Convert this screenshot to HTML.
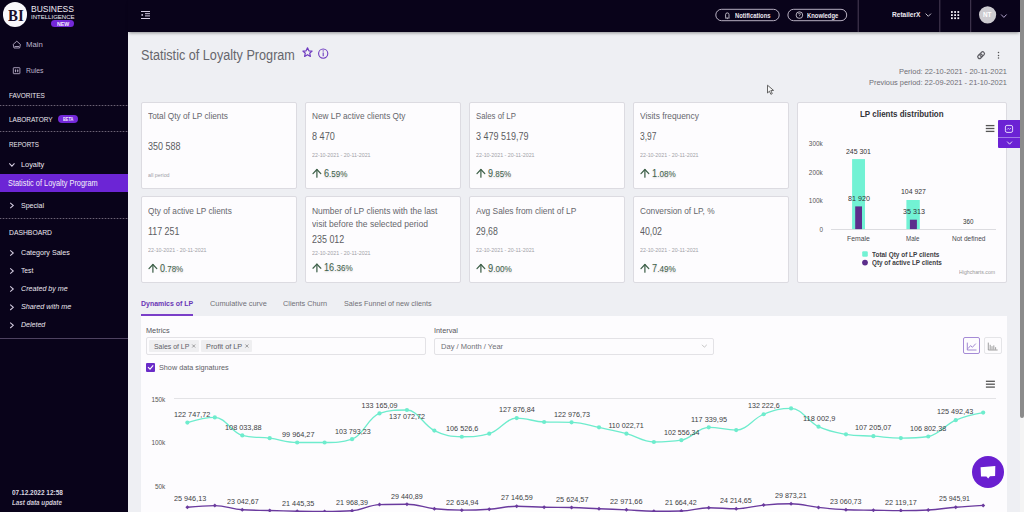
<!DOCTYPE html>
<html><head><meta charset="utf-8">
<style>
*{box-sizing:border-box;margin:0;padding:0}
html,body{width:1024px;height:512px;overflow:hidden;background:#eeeff3;font-family:"Liberation Sans",sans-serif;position:relative}
.a{position:absolute}
.t{position:absolute;white-space:pre;line-height:1;transform-origin:0 0}
#side{position:absolute;left:0;top:0;width:128px;height:512px;background:#09031a}
#hdr{position:absolute;left:128px;top:0;width:892px;height:32px;background:#09031a;box-shadow:0 2px 3px -1px rgba(0,0,0,.4)}
.card{position:absolute;background:#fdfcfe;border:1px solid #dcdbe1;border-radius:2px}
.pill{position:absolute;border:1px solid #bdb6c6;border-radius:7px}
</style></head><body>
<div id="side"></div>
<div id="hdr"></div>
<!-- scrollbar -->
<div class="a" style="left:1020px;top:0;width:4px;height:512px;background:#f4f4f4"></div>
<div class="a" style="left:1020px;top:0;width:4px;height:418px;background:#8b8b8b;border-radius:0 0 2px 2px"></div>

<!-- sidebar shapes -->
<div class="a" style="left:2.7px;top:2.4px;width:24.6px;height:24.6px;border-radius:50%;background:#faf8fc"></div>
<span class="t" style="left:7.6px;top:7.6px;font-family:'Liberation Serif',serif;font-weight:700;font-size:16.5px;color:#1a0f2a;transform:scaleX(0.9)">BI</span>
<div class="a" style="left:51px;top:20.2px;width:23px;height:7px;border-radius:4px;background:#7328d8"></div>
<div class="a" style="left:0;top:105.3px;width:128px;height:1px;background:repeating-linear-gradient(90deg,#6a6276 0 1.5px,#2a2236 1.5px 3px)"></div>
<div class="a" style="left:58.3px;top:114.8px;width:20px;height:8.7px;border-radius:5px;background:#7328d8"></div>
<div class="a" style="left:0;top:131px;width:128px;height:1px;background:repeating-linear-gradient(90deg,#6a6276 0 1.5px,#2a2236 1.5px 3px)"></div>
<div class="a" style="left:0;top:173.7px;width:128px;height:18.1px;background:#6c25d5"></div>
<div class="a" style="left:0;top:218px;width:128px;height:1px;background:repeating-linear-gradient(90deg,#6a6276 0 1.5px,#2a2236 1.5px 3px)"></div>
<div class="a" style="left:0;top:337.8px;width:128px;height:1.2px;background:#4e4260"></div>
<svg class="a" style="left:0;top:0" width="128" height="512" viewBox="0 0 128 512">
 <g fill="none" stroke="#b4aac4" stroke-width="0.9">
  <path d="M13.2 44.4 L16.8 41.2 L20.4 44.4 L19.6 48 H14 Z"/>
  <path d="M14.6 46.5 H19"/>
  <rect x="13.3" y="67.7" width="6.6" height="6" rx="0.5"/>
  <path d="M15.5 69.4 V72.2 M17.7 69.4 V72.2 M14.8 70.8 H16.2 M17 70.8 H18.4"/>
 </g>
 <g fill="none" stroke="#d4cce0" stroke-width="1.05">
  <path d="M9.3 163.4 L11.9 166.2 L14.5 163.4"/>
  <path d="M10.2 202.8 L13.3 205.5 L10.2 208.2"/>
  <path d="M10.2 250.3 L13.3 253.0 L10.2 255.7"/>
  <path d="M10.2 268.3 L13.3 271.0 L10.2 273.7"/>
  <path d="M10.2 286.3 L13.3 289.0 L10.2 291.7"/>
  <path d="M10.2 304.6 L13.3 307.3 L10.2 310.0"/>
  <path d="M10.2 322.6 L13.3 325.3 L10.2 328.0"/>
 </g>
</svg>

<!-- header shapes -->
<svg class="a" style="left:128px;top:0" width="892" height="32" viewBox="128 0 892 32">
 <g fill="#d6cce6">
  <rect x="141" y="11" width="9" height="1"/>
  <rect x="145" y="13.2" width="5" height="1"/>
  <rect x="145" y="15.4" width="5" height="1"/>
  <circle cx="142.2" cy="14.9" r="0.9"/>
  <rect x="141" y="18" width="9" height="1"/>
 </g>
 <rect x="715.8" y="9.3" width="63.4" height="11.4" rx="5.7" fill="none" stroke="#c9c2d2" stroke-width="0.9"/>
 <rect x="787.9" y="9.3" width="58.8" height="11.4" rx="5.7" fill="none" stroke="#c9c2d2" stroke-width="0.9"/>
 <path d="M725 18 H729.6 M725.6 17.6 V14.6 A1.7 1.7 0 0 1 729 14.6 V17.6 M726.8 18.6 H727.8" fill="none" stroke="#e0dce6" stroke-width="0.8"/>
 <circle cx="799.4" cy="15.1" r="3.3" fill="none" stroke="#e0dce6" stroke-width="0.8"/>
 <path d="M798.4 14.2 A1 1 0 1 1 799.6 15.2 V15.9 M799.5 16.9 V17.2" fill="none" stroke="#e0dce6" stroke-width="0.7"/>
 <rect x="857.7" y="0" width="1" height="32" fill="#4a3f58"/>
 <rect x="939.3" y="0" width="1" height="32" fill="#4a3f58"/>
 <rect x="970.2" y="0" width="1" height="32" fill="#4a3f58"/>
 <path d="M925.6 13.6 L928.3 16.3 L931 13.6" fill="none" stroke="#d8d4de" stroke-width="0.9"/>
 <g fill="#f4f0f8">
  <rect x="951" y="11.1" width="1.8" height="1.8"/>
  <rect x="954.2" y="11.1" width="1.8" height="1.8"/>
  <rect x="957.4" y="11.1" width="1.8" height="1.8"/>
  <rect x="951" y="14.2" width="1.8" height="1.8"/>
  <rect x="954.2" y="14.2" width="1.8" height="1.8"/>
  <rect x="957.4" y="14.2" width="1.8" height="1.8"/>
  <rect x="951" y="17.3" width="1.8" height="1.8"/>
  <rect x="954.2" y="17.3" width="1.8" height="1.8"/>
  <rect x="957.4" y="17.3" width="1.8" height="1.8"/>
 </g>
 <circle cx="987.6" cy="14.8" r="8.6" fill="#cdcbd0"/>
 <path d="M1001.1 14.5 L1003.85 17.4 L1006.6 14.5" fill="none" stroke="#c4b4e0" stroke-width="0.9"/>
</svg>

<!-- title icons -->
<svg class="a" style="left:296px;top:40px" width="40" height="24" viewBox="296 40 40 24">
 <path d="M307.5 47.8 L308.9 50.8 L312.1 51.1 L309.7 53.2 L310.4 56.4 L307.5 54.7 L304.6 56.4 L305.3 53.2 L302.9 51.1 L306.1 50.8 Z" fill="none" stroke="#6f3cc0" stroke-width="1.2" stroke-linejoin="round"/>
 <circle cx="323.2" cy="53.6" r="4.6" fill="none" stroke="#6f3cc0" stroke-width="1.1"/>
 <path d="M323.2 52.6 V56.2" stroke="#6f3cc0" stroke-width="1.1"/>
 <circle cx="323.2" cy="50.9" r="0.7" fill="#6f3cc0"/>
</svg>
<svg class="a" style="left:970px;top:44px" width="40" height="20" viewBox="970 44 40 20">
 <g fill="none" stroke="#5e5e64" stroke-width="1.2" transform="rotate(-45 981.1 55.2)">
  <rect x="977.1" y="53.4" width="5" height="3.6" rx="1.8"/>
  <rect x="980.1" y="53.4" width="5" height="3.6" rx="1.8"/>
 </g>
 <circle cx="998.5" cy="52.6" r="0.75" fill="#555"/><circle cx="998.5" cy="55.4" r="0.75" fill="#555"/><circle cx="998.5" cy="58.1" r="0.75" fill="#555"/>
</svg>
<!-- cursor -->
<svg class="a" style="left:762px;top:80px" width="18" height="18" viewBox="762 80 18 18">
 <path d="M767.5 85.2 V93 L769.4 91.2 L770.9 94.3 L772.3 93.6 L770.8 90.6 L773.6 90.4 Z" fill="#f8f8f8" stroke="#555" stroke-width="0.9" stroke-linejoin="round"/>
</svg>

<!-- cards -->
<div class="card" style="left:141px;top:102px;width:156px;height:87px"></div>
<div class="card" style="left:305px;top:102px;width:156px;height:87px"></div>
<div class="card" style="left:469px;top:102px;width:156px;height:87px"></div>
<div class="card" style="left:633px;top:102px;width:156px;height:87px"></div>
<div class="card" style="left:141px;top:196px;width:156px;height:87px"></div>
<div class="card" style="left:305px;top:196px;width:156px;height:87px"></div>
<div class="card" style="left:469px;top:196px;width:156px;height:87px"></div>
<div class="card" style="left:633px;top:196px;width:156px;height:87px"></div>
<div class="card" style="left:797px;top:102px;width:210px;height:181px"></div>
<!-- purple side buttons -->
<div class="a" style="left:998px;top:120.3px;width:22px;height:27.5px;background:#6b22d4;border-radius:1px 0 0 1px"></div>
<div class="a" style="left:998px;top:137px;width:22px;height:1px;background:#a47ae8"></div>
<svg class="a" style="left:998px;top:120px" width="22" height="30" viewBox="998 120 22 30">
 <rect x="1005.4" y="125.4" width="7.2" height="7" rx="1.6" fill="none" stroke="#e2d4fa" stroke-width="1"/>
 <path d="M1007 129.6 L1008.4 128.2 L1009.6 129.4 L1011 128" fill="none" stroke="#e2d4fa" stroke-width="0.8"/>
 <path d="M1007.2 141.6 L1009.6 144.2 L1012 141.6" fill="none" stroke="#f0e8fc" stroke-width="0.9"/>
</svg>

<!-- tabs underline + panel -->
<div class="a" style="left:140.5px;top:314.3px;width:52.2px;height:1.5px;background:#7a3fc8"></div>
<div class="a" style="left:141px;top:316px;width:866px;height:196px;background:#fdfcfe"></div>
<div class="a" style="left:146.3px;top:337.2px;width:279.7px;height:17.8px;border:1px solid #e3e2e6;border-radius:2px"></div>
<div class="a" style="left:148.9px;top:340px;width:50.1px;height:12.2px;background:#efeff1;border-radius:1px"></div>
<div class="a" style="left:201.2px;top:340px;width:51.2px;height:12.2px;background:#efeff1;border-radius:1px"></div>
<div class="a" style="left:434.4px;top:337.5px;width:279.2px;height:17.4px;border:1px solid #e3e2e6;border-radius:2px"></div>
<div class="a" style="left:146.3px;top:363px;width:8.5px;height:8.5px;background:#6a2cc8;border-radius:1px"></div>
<div class="a" style="left:963.1px;top:337.2px;width:17.3px;height:17.3px;border:1px solid #a58bd6;border-radius:2px"></div>
<div class="a" style="left:984.3px;top:337.2px;width:17.5px;height:17.3px;border:1px solid #e5e5e8;border-radius:2px"></div>
<svg class="a" style="left:140px;top:336px" width="870" height="40" viewBox="140 336 870 40">
 <path d="M192.2 344.5 L195.2 347.5 M195.2 344.5 L192.2 347.5 M245.4 344.5 L248.4 347.5 M248.4 344.5 L245.4 347.5" stroke="#777" stroke-width="0.7"/>
 <path d="M702 344.8 L704.4 347.2 L706.8 344.8" fill="none" stroke="#aaa" stroke-width="0.7"/>
 <path d="M148 367.2 L150 369.2 L153.2 365.4" fill="none" stroke="#fff" stroke-width="1.1"/>
 <g fill="none" stroke="#8a6cc6" stroke-width="0.8">
  <path d="M967.3 342.6 V350 H976.5"/>
  <path d="M968 348.6 L970.6 345.6 L972.4 347.3 L975.8 343.6"/>
 </g>
 <g fill="none" stroke="#888" stroke-width="0.8">
  <path d="M988.3 342.6 V350 H997.6"/>
  <path d="M990.2 349.6 V344.8 M992 349.6 V346.2 M993.8 349.6 V345.4 M995.6 349.6 V347.2"/>
 </g>
</svg>

<!-- charts -->
<svg class="a" style="left:0;top:0" width="1024" height="512" viewBox="0 0 1024 512">
<line x1="831" y1="229.5" x2="996" y2="229.5" stroke="#dcdce0" stroke-width="1"/>
<rect x="852.1" y="159.1" width="12.9" height="70.00" fill="#72f2d4"/>
<rect x="906.4" y="200" width="13.4" height="29.1" fill="#72f2d4"/>
<rect x="855.2" y="206.4" width="6.8" height="22.7" fill="#5c2e8c"/>
<rect x="909.9" y="219.7" width="7" height="9.4" fill="#5c2e8c"/>
<rect x="862.2" y="251.2" width="5.6" height="5.6" rx="1.2" fill="#72f2d4"/>
<circle cx="865" cy="262.6" r="2.9" fill="#5c2e8c"/>
<rect x="985.8" y="124.95" width="8.6" height="1.3" fill="#555"/>
<rect x="985.8" y="127.85" width="8.6" height="1.3" fill="#555"/>
<rect x="985.8" y="130.75" width="8.6" height="1.3" fill="#555"/>
<rect x="985.9" y="380.65" width="9" height="1.3" fill="#555"/>
<rect x="985.9" y="383.55" width="9" height="1.3" fill="#555"/>
<rect x="985.9" y="386.45" width="9" height="1.3" fill="#555"/>
<line x1="174" y1="398.5" x2="996" y2="398.5" stroke="#e3e3e6" stroke-width="1"/>
<path d="M187.40 422.55 C187.40 422.55 203.86 417.40 214.84 417.40 C225.82 417.40 231.30 432.64 242.28 435.42 C253.26 438.20 258.74 436.79 269.72 438.20 C280.70 439.61 286.18 442.46 297.16 442.48 C308.14 442.50 313.62 442.50 324.60 442.50 C335.58 442.50 341.06 442.50 352.04 439.13 C363.02 435.76 368.50 416.85 379.48 413.43 C390.46 410.01 395.94 410.01 406.92 410.01 C417.90 410.01 423.38 425.25 434.36 430.60 C445.34 435.95 450.82 436.74 461.80 436.74 C472.78 436.74 478.26 436.74 489.24 433.70 C500.22 430.66 505.70 418.06 516.68 418.06 C527.66 418.06 533.14 421.65 544.12 422.00 C555.10 422.35 560.58 422.00 571.56 422.35 C582.54 422.69 588.02 425.03 599.00 427.30 C609.98 429.57 615.46 430.74 626.44 433.68 C637.42 436.62 642.90 442.00 653.88 442.00 C664.86 442.00 670.34 442.00 681.32 440.21 C692.30 438.43 697.78 427.28 708.76 427.28 C719.74 427.28 725.22 430.10 736.20 430.10 C747.18 430.10 752.66 418.60 763.64 414.26 C774.62 409.92 780.10 408.40 791.08 408.40 C802.06 408.40 807.54 421.52 818.52 426.70 C829.50 431.88 834.98 432.45 845.96 434.30 C856.94 436.15 862.42 435.39 873.40 436.15 C884.38 436.91 889.86 438.10 900.84 438.10 C911.82 438.10 917.30 438.10 928.28 436.50 C939.26 434.90 944.74 424.92 955.72 420.14 C966.70 415.36 983.16 412.60 983.16 412.60" fill="none" stroke="#6eeccd" stroke-width="1.3"/>
<circle cx="187.40" cy="422.55" r="2.1" fill="#6eeccd"/>
<circle cx="214.84" cy="417.40" r="2.1" fill="#6eeccd"/>
<circle cx="242.28" cy="435.42" r="2.1" fill="#6eeccd"/>
<circle cx="269.72" cy="438.20" r="2.1" fill="#6eeccd"/>
<circle cx="297.16" cy="442.48" r="2.1" fill="#6eeccd"/>
<circle cx="324.60" cy="442.50" r="2.1" fill="#6eeccd"/>
<circle cx="352.04" cy="439.13" r="2.1" fill="#6eeccd"/>
<circle cx="379.48" cy="413.43" r="2.1" fill="#6eeccd"/>
<circle cx="406.92" cy="410.01" r="2.1" fill="#6eeccd"/>
<circle cx="434.36" cy="430.60" r="2.1" fill="#6eeccd"/>
<circle cx="461.80" cy="436.74" r="2.1" fill="#6eeccd"/>
<circle cx="489.24" cy="433.70" r="2.1" fill="#6eeccd"/>
<circle cx="516.68" cy="418.06" r="2.1" fill="#6eeccd"/>
<circle cx="544.12" cy="422.00" r="2.1" fill="#6eeccd"/>
<circle cx="571.56" cy="422.35" r="2.1" fill="#6eeccd"/>
<circle cx="599.00" cy="427.30" r="2.1" fill="#6eeccd"/>
<circle cx="626.44" cy="433.68" r="2.1" fill="#6eeccd"/>
<circle cx="653.88" cy="442.00" r="2.1" fill="#6eeccd"/>
<circle cx="681.32" cy="440.21" r="2.1" fill="#6eeccd"/>
<circle cx="708.76" cy="427.28" r="2.1" fill="#6eeccd"/>
<circle cx="736.20" cy="430.10" r="2.1" fill="#6eeccd"/>
<circle cx="763.64" cy="414.26" r="2.1" fill="#6eeccd"/>
<circle cx="791.08" cy="408.40" r="2.1" fill="#6eeccd"/>
<circle cx="818.52" cy="426.70" r="2.1" fill="#6eeccd"/>
<circle cx="845.96" cy="434.30" r="2.1" fill="#6eeccd"/>
<circle cx="873.40" cy="436.15" r="2.1" fill="#6eeccd"/>
<circle cx="900.84" cy="438.10" r="2.1" fill="#6eeccd"/>
<circle cx="928.28" cy="436.50" r="2.1" fill="#6eeccd"/>
<circle cx="955.72" cy="420.14" r="2.1" fill="#6eeccd"/>
<circle cx="983.16" cy="412.60" r="2.1" fill="#6eeccd"/>
<path d="M187.40 507.25 C187.40 507.25 203.86 505.60 214.84 505.60 C225.82 505.60 231.30 509.08 242.28 509.79 C253.26 510.50 258.74 510.22 269.72 510.50 C280.70 510.78 286.18 510.99 297.16 511.19 C308.14 511.39 313.62 511.50 324.60 511.50 C335.58 511.50 341.06 511.50 352.04 510.73 C363.02 509.96 368.50 505.01 379.48 504.60 C390.46 504.19 395.94 504.19 406.92 504.19 C417.90 504.19 423.38 507.51 434.36 508.70 C445.34 509.89 450.82 510.14 461.80 510.14 C472.78 510.14 478.26 509.99 489.24 509.20 C500.22 508.41 505.70 506.20 516.68 506.20 C527.66 506.20 533.14 506.93 544.12 507.20 C555.10 507.47 560.58 507.23 571.56 507.53 C582.54 507.83 588.02 508.24 599.00 508.70 C609.98 509.16 615.46 509.35 626.44 509.85 C637.42 510.35 642.90 511.20 653.88 511.20 C664.86 511.20 670.34 511.20 681.32 510.99 C692.30 510.79 697.78 507.70 708.76 507.70 C719.74 507.70 725.22 508.76 736.20 508.76 C747.18 508.76 752.66 506.09 763.64 505.10 C774.62 504.11 780.10 503.81 791.08 503.81 C802.06 503.81 807.54 506.21 818.52 507.40 C829.50 508.59 834.98 509.34 845.96 509.77 C856.94 510.20 862.42 510.04 873.40 510.20 C884.38 510.36 889.86 510.60 900.84 510.60 C911.82 510.60 917.30 510.60 928.28 510.00 C939.26 509.40 944.74 508.17 955.72 507.25 C966.70 506.33 983.16 505.40 983.16 505.40" fill="none" stroke="#6a3a9e" stroke-width="1.4"/>
<path d="M187.40 505.25L189.40 507.25L187.40 509.25L185.40 507.25Z" fill="#6a3a9e"/>
<path d="M214.84 503.60L216.84 505.60L214.84 507.60L212.84 505.60Z" fill="#6a3a9e"/>
<path d="M242.28 507.79L244.28 509.79L242.28 511.79L240.28 509.79Z" fill="#6a3a9e"/>
<path d="M269.72 508.50L271.72 510.50L269.72 512.50L267.72 510.50Z" fill="#6a3a9e"/>
<path d="M297.16 509.19L299.16 511.19L297.16 513.19L295.16 511.19Z" fill="#6a3a9e"/>
<path d="M324.60 509.50L326.60 511.50L324.60 513.50L322.60 511.50Z" fill="#6a3a9e"/>
<path d="M352.04 508.73L354.04 510.73L352.04 512.73L350.04 510.73Z" fill="#6a3a9e"/>
<path d="M379.48 502.60L381.48 504.60L379.48 506.60L377.48 504.60Z" fill="#6a3a9e"/>
<path d="M406.92 502.19L408.92 504.19L406.92 506.19L404.92 504.19Z" fill="#6a3a9e"/>
<path d="M434.36 506.70L436.36 508.70L434.36 510.70L432.36 508.70Z" fill="#6a3a9e"/>
<path d="M461.80 508.14L463.80 510.14L461.80 512.14L459.80 510.14Z" fill="#6a3a9e"/>
<path d="M489.24 507.20L491.24 509.20L489.24 511.20L487.24 509.20Z" fill="#6a3a9e"/>
<path d="M516.68 504.20L518.68 506.20L516.68 508.20L514.68 506.20Z" fill="#6a3a9e"/>
<path d="M544.12 505.20L546.12 507.20L544.12 509.20L542.12 507.20Z" fill="#6a3a9e"/>
<path d="M571.56 505.53L573.56 507.53L571.56 509.53L569.56 507.53Z" fill="#6a3a9e"/>
<path d="M599.00 506.70L601.00 508.70L599.00 510.70L597.00 508.70Z" fill="#6a3a9e"/>
<path d="M626.44 507.85L628.44 509.85L626.44 511.85L624.44 509.85Z" fill="#6a3a9e"/>
<path d="M653.88 509.20L655.88 511.20L653.88 513.20L651.88 511.20Z" fill="#6a3a9e"/>
<path d="M681.32 508.99L683.32 510.99L681.32 512.99L679.32 510.99Z" fill="#6a3a9e"/>
<path d="M708.76 505.70L710.76 507.70L708.76 509.70L706.76 507.70Z" fill="#6a3a9e"/>
<path d="M736.20 506.76L738.20 508.76L736.20 510.76L734.20 508.76Z" fill="#6a3a9e"/>
<path d="M763.64 503.10L765.64 505.10L763.64 507.10L761.64 505.10Z" fill="#6a3a9e"/>
<path d="M791.08 501.81L793.08 503.81L791.08 505.81L789.08 503.81Z" fill="#6a3a9e"/>
<path d="M818.52 505.40L820.52 507.40L818.52 509.40L816.52 507.40Z" fill="#6a3a9e"/>
<path d="M845.96 507.77L847.96 509.77L845.96 511.77L843.96 509.77Z" fill="#6a3a9e"/>
<path d="M873.40 508.20L875.40 510.20L873.40 512.20L871.40 510.20Z" fill="#6a3a9e"/>
<path d="M900.84 508.60L902.84 510.60L900.84 512.60L898.84 510.60Z" fill="#6a3a9e"/>
<path d="M928.28 508.00L930.28 510.00L928.28 512.00L926.28 510.00Z" fill="#6a3a9e"/>
<path d="M955.72 505.25L957.72 507.25L955.72 509.25L953.72 507.25Z" fill="#6a3a9e"/>
<path d="M983.16 503.40L985.16 505.40L983.16 507.40L981.16 505.40Z" fill="#6a3a9e"/>
<g stroke="#3e6049" stroke-width="1.25" fill="none" stroke-linecap="round" stroke-linejoin="round"><path d="M316.90 169.60V177.20"/><path d="M313.00 173.60L316.90 169.50L320.80 173.60"/></g>
<g stroke="#3e6049" stroke-width="1.25" fill="none" stroke-linecap="round" stroke-linejoin="round"><path d="M480.90 169.60V177.20"/><path d="M477.00 173.60L480.90 169.50L484.80 173.60"/></g>
<g stroke="#3e6049" stroke-width="1.25" fill="none" stroke-linecap="round" stroke-linejoin="round"><path d="M644.90 169.60V177.20"/><path d="M641.00 173.60L644.90 169.50L648.80 173.60"/></g>
<g stroke="#3e6049" stroke-width="1.25" fill="none" stroke-linecap="round" stroke-linejoin="round"><path d="M152.90 264.60V272.20"/><path d="M149.00 268.60L152.90 264.50L156.80 268.60"/></g>
<g stroke="#3e6049" stroke-width="1.25" fill="none" stroke-linecap="round" stroke-linejoin="round"><path d="M316.90 264.20V271.80"/><path d="M313.00 268.20L316.90 264.10L320.80 268.20"/></g>
<g stroke="#3e6049" stroke-width="1.25" fill="none" stroke-linecap="round" stroke-linejoin="round"><path d="M480.90 264.60V272.20"/><path d="M477.00 268.60L480.90 264.50L484.80 268.60"/></g>
<g stroke="#3e6049" stroke-width="1.25" fill="none" stroke-linecap="round" stroke-linejoin="round"><path d="M644.90 264.60V272.20"/><path d="M641.00 268.60L644.90 264.50L648.80 268.60"/></g>
</svg>

<!-- chat bubble -->
<div class="a" style="left:972.3px;top:455.8px;width:32px;height:32px;border-radius:50%;background:#6a1fd0"></div>
<svg class="a" style="left:970px;top:454px" width="36" height="36" viewBox="970 454 36 36">
 <path d="M980.6 467.2 L995.3 466.1 L995.1 476.1 L990 476.3 L988.2 478.6 L986.4 476.4 L981 476.6 Z" fill="#fff"/>
</svg>

<span class='t' style='left:30.50px;top:5.51px;font-size:8.2px;font-weight:400;font-style:normal;color:#f0ecf4;transform:scaleX(1.0371);'>BUSINESS</span>
<span class='t' style='left:30.50px;top:14.18px;font-size:6.2px;font-weight:400;font-style:normal;color:#f0ecf4;transform:scaleX(0.9759);'>INTELLIGENCE</span>
<span class='t' style='left:56.50px;top:20.68px;font-size:6px;font-weight:700;font-style:normal;color:#f4eefc;transform:scaleX(0.8720);'>NEW</span>
<span class='t' style='left:25.60px;top:40.70px;font-size:8px;font-weight:400;font-style:normal;color:#beb5cc;transform:scaleX(0.9710);'>Main</span>
<span class='t' style='left:25.60px;top:66.60px;font-size:8px;font-weight:400;font-style:normal;color:#beb5cc;transform:scaleX(0.8556);'>Rules</span>
<span class='t' style='left:8.80px;top:91.50px;font-size:8px;font-weight:400;font-style:normal;color:#ece8f0;transform:scaleX(0.8074);'>FAVORITES</span>
<span class='t' style='left:8.80px;top:115.60px;font-size:8px;font-weight:400;font-style:normal;color:#ece8f0;transform:scaleX(0.8116);'>LABORATORY</span>
<span class='t' style='left:63.00px;top:116.67px;font-size:5.2px;font-weight:700;font-style:normal;color:#f4eefc;transform:scaleX(0.7506);'>BETA</span>
<span class='t' style='left:8.80px;top:140.50px;font-size:8px;font-weight:400;font-style:normal;color:#ece8f0;transform:scaleX(0.7777);'>REPORTS</span>
<span class='t' style='left:21.30px;top:161.30px;font-size:8px;font-weight:400;font-style:normal;color:#ece8f0;transform:scaleX(0.9192);'>Loyalty</span>
<span class='t' style='left:8.40px;top:178.71px;font-size:8.6px;font-weight:400;font-style:normal;color:#f6f2fa;transform:scaleX(0.8579);'>Statistic of Loyalty Program</span>
<span class='t' style='left:21.30px;top:201.60px;font-size:8px;font-weight:400;font-style:normal;color:#ece8f0;transform:scaleX(0.8805);'>Special</span>
<span class='t' style='left:8.80px;top:228.80px;font-size:8px;font-weight:400;font-style:normal;color:#ece8f0;transform:scaleX(0.8487);'>DASHBOARD</span>
<span class='t' style='left:21.30px;top:249.10px;font-size:8px;font-weight:400;font-style:normal;color:#ece8f0;transform:scaleX(0.8904);'>Category Sales</span>
<span class='t' style='left:21.30px;top:267.10px;font-size:8px;font-weight:400;font-style:normal;color:#ece8f0;transform:scaleX(0.8415);'>Test</span>
<span class='t' style='left:21.30px;top:285.10px;font-size:8px;font-weight:400;font-style:italic;color:#ece8f0;transform:scaleX(0.8902);'>Created by me</span>
<span class='t' style='left:21.30px;top:303.40px;font-size:8px;font-weight:400;font-style:italic;color:#ece8f0;transform:scaleX(0.9032);'>Shared with me</span>
<span class='t' style='left:21.30px;top:321.40px;font-size:8px;font-weight:400;font-style:italic;color:#ece8f0;transform:scaleX(0.8782);'>Deleted</span>
<span class='t' style='left:12.00px;top:488.59px;font-size:7px;font-weight:700;font-style:normal;color:#dcd8e2;transform:scaleX(0.9275);'>07.12.2022 12:58</span>
<span class='t' style='left:12.00px;top:498.79px;font-size:7px;font-weight:700;font-style:italic;color:#cdc8d6;transform:scaleX(0.8972);'>Last data update</span>
<span class='t' style='left:734.70px;top:12.19px;font-size:7px;font-weight:700;font-style:normal;color:#ece8f0;transform:scaleX(0.8377);'>Notifications</span>
<span class='t' style='left:807.00px;top:12.19px;font-size:7px;font-weight:700;font-style:normal;color:#ece8f0;transform:scaleX(0.8360);'>Knowledge</span>
<span class='t' style='left:892.00px;top:10.90px;font-size:8px;font-weight:700;font-style:normal;color:#ece8f0;transform:scaleX(0.8204);'>RetailerX</span>
<span class='t' style='left:983.10px;top:11.20px;font-size:7.6px;font-weight:700;font-style:normal;color:#ffffff;transform:scaleX(0.8394);'>NT</span>
<span class='t' style='left:140.90px;top:48.18px;font-size:14px;font-weight:400;font-style:normal;color:#66666c;transform:scaleX(0.9032);'>Statistic of Loyalty Program</span>
<span class='t' style='left:898.80px;top:67.70px;font-size:7.6px;font-weight:400;font-style:normal;color:#6e6e76;transform:scaleX(0.9807);'>Period: 22-10-2021 - 20-11-2021</span>
<span class='t' style='left:868.80px;top:79.40px;font-size:7.6px;font-weight:400;font-style:normal;color:#6e6e76;transform:scaleX(0.9752);'>Previous period: 22-09-2021 - 21-10-2021</span>
<span class='t' style='left:148.00px;top:112.01px;font-size:8.8px;font-weight:400;font-style:normal;color:#66666c;transform:scaleX(0.9408);'>Total Qty of LP clients</span>
<span class='t' style='left:148.00px;top:142.13px;font-size:10px;font-weight:400;font-style:normal;color:#5c5c62;transform:scaleX(0.8993);'>350 588</span>
<span class='t' style='left:148.00px;top:173.32px;font-size:5.5px;font-weight:400;font-style:normal;color:#a0a0a6;transform:scaleX(0.9658);'>all period</span>
<span class='t' style='left:312.00px;top:112.01px;font-size:8.8px;font-weight:400;font-style:normal;color:#66666c;transform:scaleX(0.9379);'>New LP active clients Qty</span>
<span class='t' style='left:312.00px;top:132.13px;font-size:10px;font-weight:400;font-style:normal;color:#5c5c62;transform:scaleX(0.9111);'>8 470</span>
<span class='t' style='left:312.00px;top:152.72px;font-size:5.5px;font-weight:400;font-style:normal;color:#a0a0a6;transform:scaleX(0.9639);'>22-10-2021 - 20-11-2021</span>
<span class='t' style='left:476.00px;top:112.01px;font-size:8.8px;font-weight:400;font-style:normal;color:#66666c;transform:scaleX(0.8865);'>Sales of LP</span>
<span class='t' style='left:476.00px;top:132.13px;font-size:10px;font-weight:400;font-style:normal;color:#5c5c62;transform:scaleX(0.9009);'>3 479 519,79</span>
<span class='t' style='left:476.00px;top:152.72px;font-size:5.5px;font-weight:400;font-style:normal;color:#a0a0a6;transform:scaleX(0.9639);'>22-10-2021 - 20-11-2021</span>
<span class='t' style='left:640.00px;top:112.01px;font-size:8.8px;font-weight:400;font-style:normal;color:#66666c;transform:scaleX(0.9498);'>Visits frequency</span>
<span class='t' style='left:640.00px;top:132.13px;font-size:10px;font-weight:400;font-style:normal;color:#5c5c62;transform:scaleX(0.8442);'>3,97</span>
<span class='t' style='left:640.00px;top:152.72px;font-size:5.5px;font-weight:400;font-style:normal;color:#a0a0a6;transform:scaleX(0.9639);'>22-10-2021 - 20-11-2021</span>
<span class='t' style='left:148.00px;top:206.61px;font-size:8.8px;font-weight:400;font-style:normal;color:#66666c;transform:scaleX(0.9381);'>Qty of active LP clients</span>
<span class='t' style='left:148.00px;top:227.13px;font-size:10px;font-weight:400;font-style:normal;color:#5c5c62;transform:scaleX(0.8872);'>117 251</span>
<span class='t' style='left:148.00px;top:247.72px;font-size:5.5px;font-weight:400;font-style:normal;color:#a0a0a6;transform:scaleX(0.9639);'>22-10-2021 - 20-11-2021</span>
<span class='t' style='left:312.00px;top:206.61px;font-size:8.8px;font-weight:400;font-style:normal;color:#66666c;transform:scaleX(0.9619);'>Number of LP clients with the last</span>
<span class='t' style='left:312.00px;top:219.61px;font-size:8.8px;font-weight:400;font-style:normal;color:#66666c;transform:scaleX(0.9713);'>visit before the selected period</span>
<span class='t' style='left:312.00px;top:235.03px;font-size:10px;font-weight:400;font-style:normal;color:#5c5c62;transform:scaleX(0.8938);'>235 012</span>
<span class='t' style='left:312.00px;top:251.42px;font-size:5.5px;font-weight:400;font-style:normal;color:#a0a0a6;transform:scaleX(0.9639);'>22-10-2021 - 20-11-2021</span>
<span class='t' style='left:476.00px;top:206.61px;font-size:8.8px;font-weight:400;font-style:normal;color:#66666c;transform:scaleX(0.9509);'>Avg Sales from client of LP</span>
<span class='t' style='left:476.00px;top:227.13px;font-size:10px;font-weight:400;font-style:normal;color:#5c5c62;transform:scaleX(0.8719);'>29,68</span>
<span class='t' style='left:476.00px;top:247.72px;font-size:5.5px;font-weight:400;font-style:normal;color:#a0a0a6;transform:scaleX(0.9639);'>22-10-2021 - 20-11-2021</span>
<span class='t' style='left:640.00px;top:206.61px;font-size:8.8px;font-weight:400;font-style:normal;color:#66666c;transform:scaleX(0.9428);'>Conversion of LP, %</span>
<span class='t' style='left:640.00px;top:227.13px;font-size:10px;font-weight:400;font-style:normal;color:#5c5c62;transform:scaleX(0.8797);'>40,02</span>
<span class='t' style='left:640.00px;top:247.72px;font-size:5.5px;font-weight:400;font-style:normal;color:#a0a0a6;transform:scaleX(0.9639);'>22-10-2021 - 20-11-2021</span>
<span class='t' style='left:860.20px;top:110.01px;font-size:8.8px;font-weight:700;font-style:normal;color:#333338;transform:scaleX(0.9065);'>LP clients distribution</span>
<span class='t' style='left:808.84px;top:141.28px;font-size:6.4px;font-weight:400;font-style:normal;color:#555;'>300k</span>
<span class='t' style='left:808.84px;top:169.88px;font-size:6.4px;font-weight:400;font-style:normal;color:#555;'>200k</span>
<span class='t' style='left:808.84px;top:198.18px;font-size:6.4px;font-weight:400;font-style:normal;color:#555;'>100k</span>
<span class='t' style='left:819.50px;top:226.68px;font-size:6.4px;font-weight:400;font-style:normal;color:#555;'>0</span>
<span class='t' style='left:847.00px;top:234.69px;font-size:7px;font-weight:400;font-style:normal;color:#48484e;transform:scaleX(0.9809);'>Female</span>
<span class='t' style='left:906.45px;top:234.69px;font-size:7px;font-weight:400;font-style:normal;color:#48484e;transform:scaleX(0.8835);'>Male</span>
<span class='t' style='left:951.55px;top:234.69px;font-size:7px;font-weight:400;font-style:normal;color:#48484e;transform:scaleX(0.9329);'>Not defined</span>
<span class='t' style='left:846.00px;top:147.79px;font-size:7px;font-weight:400;font-style:normal;color:#333;transform:scaleX(0.9839);'>245 301</span>
<span class='t' style='left:901.00px;top:188.19px;font-size:7px;font-weight:400;font-style:normal;color:#333;transform:scaleX(0.9839);'>104 927</span>
<span class='t' style='left:847.50px;top:194.89px;font-size:7px;font-weight:400;font-style:normal;color:#333;transform:scaleX(1.0224);'>81 920</span>
<span class='t' style='left:902.50px;top:208.29px;font-size:7px;font-weight:400;font-style:normal;color:#333;transform:scaleX(1.0224);'>35 313</span>
<span class='t' style='left:962.95px;top:218.09px;font-size:7px;font-weight:400;font-style:normal;color:#333;transform:scaleX(0.8909);'>360</span>
<span class='t' style='left:872.00px;top:251.39px;font-size:7.2px;font-weight:700;font-style:normal;color:#3c3c42;transform:scaleX(0.8959);'>Total Qty of LP clients</span>
<span class='t' style='left:872.00px;top:259.29px;font-size:7.2px;font-weight:700;font-style:normal;color:#3c3c42;transform:scaleX(0.8851);'>Qty of active LP clients</span>
<span class='t' style='left:959.00px;top:270.47px;font-size:5.6px;font-weight:400;font-style:normal;color:#999;transform:scaleX(0.9311);'>Highcharts.com</span>
<span class='t' style='left:140.50px;top:300.40px;font-size:7.6px;font-weight:700;font-style:normal;color:#6a35b5;transform:scaleX(0.9156);'>Dynamics of LP</span>
<span class='t' style='left:209.60px;top:300.40px;font-size:7.6px;font-weight:400;font-style:normal;color:#707076;transform:scaleX(0.9685);'>Cumulative curve</span>
<span class='t' style='left:283.40px;top:300.40px;font-size:7.6px;font-weight:400;font-style:normal;color:#707076;transform:scaleX(0.9589);'>Clients Churn</span>
<span class='t' style='left:344.30px;top:300.40px;font-size:7.6px;font-weight:400;font-style:normal;color:#707076;transform:scaleX(0.9477);'>Sales Funnel of new clients</span>
<span class='t' style='left:146.30px;top:327.20px;font-size:7.6px;font-weight:400;font-style:normal;color:#55555b;transform:scaleX(0.9647);'>Metrics</span>
<span class='t' style='left:434.40px;top:327.10px;font-size:7.6px;font-weight:400;font-style:normal;color:#55555b;transform:scaleX(0.9637);'>Interval</span>
<span class='t' style='left:153.70px;top:342.90px;font-size:7.6px;font-weight:400;font-style:normal;color:#606066;transform:scaleX(0.9079);'>Sales of LP</span>
<span class='t' style='left:206.00px;top:342.90px;font-size:7.6px;font-weight:400;font-style:normal;color:#606066;transform:scaleX(0.9653);'>Profit of LP</span>
<span class='t' style='left:440.50px;top:342.80px;font-size:7.6px;font-weight:400;font-style:normal;color:#707076;transform:scaleX(0.9939);'>Day / Month / Year</span>
<span class='t' style='left:159.00px;top:363.60px;font-size:7.6px;font-weight:400;font-style:normal;color:#606066;transform:scaleX(0.9545);'>Show data signatures</span>
<span class='t' style='left:151.44px;top:396.68px;font-size:6.4px;font-weight:400;font-style:normal;color:#555;'>150k</span>
<span class='t' style='left:151.44px;top:440.18px;font-size:6.4px;font-weight:400;font-style:normal;color:#555;'>100k</span>
<span class='t' style='left:154.99px;top:484.38px;font-size:6.4px;font-weight:400;font-style:normal;color:#555;'>50k</span>
<span class='t' style='left:174.30px;top:411.39px;font-size:7.2px;font-weight:400;font-style:normal;color:#3c3c42;transform:scaleX(1.0090);'>122 747,72</span>
<span class='t' style='left:224.50px;top:424.09px;font-size:7.2px;font-weight:400;font-style:normal;color:#3c3c42;transform:scaleX(1.0174);'>108 033,88</span>
<span class='t' style='left:281.60px;top:431.19px;font-size:7.2px;font-weight:400;font-style:normal;color:#3c3c42;transform:scaleX(1.0163);'>99 964,27</span>
<span class='t' style='left:334.90px;top:427.59px;font-size:7.2px;font-weight:400;font-style:normal;color:#3c3c42;transform:scaleX(0.9896);'>103 793,23</span>
<span class='t' style='left:361.60px;top:401.69px;font-size:7.2px;font-weight:400;font-style:normal;color:#3c3c42;'>133 165,09</span>
<span class='t' style='left:389.00px;top:413.09px;font-size:7.2px;font-weight:400;font-style:normal;color:#3c3c42;'>137 072,72</span>
<span class='t' style='left:446.10px;top:425.09px;font-size:7.2px;font-weight:400;font-style:normal;color:#3c3c42;transform:scaleX(1.0101);'>106 526,6</span>
<span class='t' style='left:498.90px;top:405.99px;font-size:7.2px;font-weight:400;font-style:normal;color:#3c3c42;'>127 876,84</span>
<span class='t' style='left:554.00px;top:410.59px;font-size:7.2px;font-weight:400;font-style:normal;color:#3c3c42;'>122 976,73</span>
<span class='t' style='left:608.40px;top:421.99px;font-size:7.2px;font-weight:400;font-style:normal;color:#3c3c42;'>110 022,71</span>
<span class='t' style='left:663.50px;top:428.89px;font-size:7.2px;font-weight:400;font-style:normal;color:#3c3c42;transform:scaleX(0.9868);'>102 556,34</span>
<span class='t' style='left:690.90px;top:415.69px;font-size:7.2px;font-weight:400;font-style:normal;color:#3c3c42;transform:scaleX(1.0158);'>117 339,95</span>
<span class='t' style='left:747.70px;top:402.49px;font-size:7.2px;font-weight:400;font-style:normal;color:#3c3c42;transform:scaleX(0.9913);'>132 222,6</span>
<span class='t' style='left:802.50px;top:415.19px;font-size:7.2px;font-weight:400;font-style:normal;color:#3c3c42;transform:scaleX(1.0272);'>118 002,9</span>
<span class='t' style='left:855.00px;top:424.09px;font-size:7.2px;font-weight:400;font-style:normal;color:#3c3c42;transform:scaleX(1.0090);'>107 205,07</span>
<span class='t' style='left:909.90px;top:424.59px;font-size:7.2px;font-weight:400;font-style:normal;color:#3c3c42;transform:scaleX(1.0062);'>106 802,38</span>
<span class='t' style='left:937.30px;top:408.39px;font-size:7.2px;font-weight:400;font-style:normal;color:#3c3c42;transform:scaleX(1.0062);'>125 492,43</span>
<span class='t' style='left:174.30px;top:495.49px;font-size:7.2px;font-weight:400;font-style:normal;color:#3c3c42;transform:scaleX(1.0069);'>25 946,13</span>
<span class='t' style='left:226.80px;top:498.09px;font-size:7.2px;font-weight:400;font-style:normal;color:#3c3c42;transform:scaleX(0.9913);'>23 042,67</span>
<span class='t' style='left:281.60px;top:499.89px;font-size:7.2px;font-weight:400;font-style:normal;color:#3c3c42;transform:scaleX(1.0101);'>21 445,35</span>
<span class='t' style='left:336.00px;top:499.29px;font-size:7.2px;font-weight:400;font-style:normal;color:#3c3c42;'>21 968,39</span>
<span class='t' style='left:391.30px;top:492.99px;font-size:7.2px;font-weight:400;font-style:normal;color:#3c3c42;transform:scaleX(0.9913);'>29 440,89</span>
<span class='t' style='left:445.80px;top:498.79px;font-size:7.2px;font-weight:400;font-style:normal;color:#3c3c42;transform:scaleX(1.0163);'>22 634,94</span>
<span class='t' style='left:500.90px;top:494.29px;font-size:7.2px;font-weight:400;font-style:normal;color:#3c3c42;'>27 146,59</span>
<span class='t' style='left:555.50px;top:495.99px;font-size:7.2px;font-weight:400;font-style:normal;color:#3c3c42;transform:scaleX(1.0163);'>25 624,57</span>
<span class='t' style='left:610.00px;top:498.09px;font-size:7.2px;font-weight:400;font-style:normal;color:#3c3c42;transform:scaleX(1.0163);'>22 971,66</span>
<span class='t' style='left:665.40px;top:499.29px;font-size:7.2px;font-weight:400;font-style:normal;color:#3c3c42;transform:scaleX(0.9913);'>21 664,42</span>
<span class='t' style='left:720.00px;top:496.79px;font-size:7.2px;font-weight:400;font-style:normal;color:#3c3c42;transform:scaleX(0.9913);'>24 214,65</span>
<span class='t' style='left:774.50px;top:492.19px;font-size:7.2px;font-weight:400;font-style:normal;color:#3c3c42;transform:scaleX(0.9913);'>29 873,21</span>
<span class='t' style='left:829.80px;top:498.09px;font-size:7.2px;font-weight:400;font-style:normal;color:#3c3c42;transform:scaleX(0.9851);'>23 060,73</span>
<span class='t' style='left:884.60px;top:499.29px;font-size:7.2px;font-weight:400;font-style:normal;color:#3c3c42;transform:scaleX(1.0082);'>22 119,17</span>
<span class='t' style='left:939.10px;top:495.49px;font-size:7.2px;font-weight:400;font-style:normal;color:#3c3c42;transform:scaleX(0.9694);'>25 945,91</span>
<span class='t' style='left:323.80px;top:168.83px;font-size:10.2px;color:#3e6049;transform:scaleX(0.8977);text-shadow:0 1px 2px rgba(0,0,0,.18)'>6<span style='font-size:9px'>.59%</span></span>
<span class='t' style='left:487.80px;top:168.83px;font-size:10.2px;color:#3e6049;transform:scaleX(0.8863);text-shadow:0 1px 2px rgba(0,0,0,.18)'>9<span style='font-size:9px'>.85%</span></span>
<span class='t' style='left:651.80px;top:168.83px;font-size:10.2px;color:#3e6049;transform:scaleX(0.9054);text-shadow:0 1px 2px rgba(0,0,0,.18)'>1<span style='font-size:9px'>.08%</span></span>
<span class='t' style='left:159.80px;top:263.83px;font-size:10.2px;color:#3e6049;transform:scaleX(0.8863);text-shadow:0 1px 2px rgba(0,0,0,.18)'>0<span style='font-size:9px'>.78%</span></span>
<span class='t' style='left:323.80px;top:263.43px;font-size:10.2px;color:#3e6049;transform:scaleX(0.8982);text-shadow:0 1px 2px rgba(0,0,0,.18)'>16<span style='font-size:9px'>.36%</span></span>
<span class='t' style='left:487.80px;top:263.83px;font-size:10.2px;color:#3e6049;transform:scaleX(0.9092);text-shadow:0 1px 2px rgba(0,0,0,.18)'>9<span style='font-size:9px'>.00%</span></span>
<span class='t' style='left:651.80px;top:263.83px;font-size:10.2px;color:#3e6049;transform:scaleX(0.9054);text-shadow:0 1px 2px rgba(0,0,0,.18)'>7<span style='font-size:9px'>.49%</span></span>
</body></html>
